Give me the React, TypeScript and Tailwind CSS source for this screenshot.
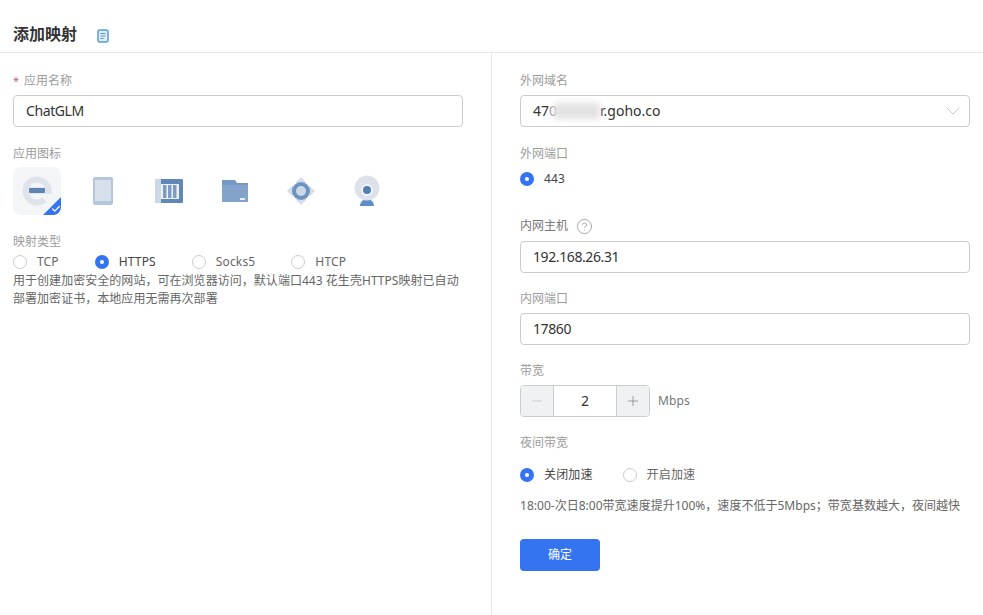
import React from "react";
import { ChevronDown, Check, CircleHelp, Minus, Plus } from "lucide-react";

const Label = ({ children, required }: { children: React.ReactNode; required?: boolean }) => (
  <div className="h-5 pt-px flex items-center text-xs leading-5 text-[#9c9c9c]">
    {required && <span className="text-[11px] text-[#c9607f] mr-[5px]">*</span>}
    {children}
  </div>
);

const Field = ({ value }: { value: string }) => (
  <div className="mt-[5px] h-8 w-[450px] rounded border border-[#ccc] bg-white px-3 flex items-center text-sm tracking-[-0.4px] text-[#333]">
    {value}
  </div>
);

const Radio = ({ text, checked, dark }: { text: string; checked?: boolean; dark?: boolean }) => (
  <div className="flex items-center gap-2.5 text-xs tracking-[0.15px]">
    {checked ? (
      <span className="w-3.5 h-3.5 rounded-full bg-[#3574f0] flex items-center justify-center">
        <span className="w-1 h-1 rounded-full bg-white" />
      </span>
    ) : (
      <span className="w-3.5 h-3.5 rounded-full border border-[#ccc] bg-white" />
    )}
    <span className={dark ? "text-[#444]" : "text-[#666]"}>{text}</span>
  </div>
);

const IconE = () => (
  <svg width="30" height="30" viewBox="0 0 30 30">
    <path d="M22.4 23.8A11.5 11.5 0 1 1 26.5 14" fill="none" stroke="#dfe3ea" strokeWidth="6" />
    <rect x="5" y="11" width="24.5" height="7" fill="#dfe3ea" />
    <rect x="7" y="12" width="16" height="5" rx="1" fill="#5f85b3" />
  </svg>
);

const IconTablet = () => (
  <svg width="22" height="30" viewBox="0 0 22 30">
    <rect x="1" y="1" width="20" height="28" rx="2" fill="#b4c6de" />
    <rect x="3" y="4" width="16" height="21" fill="#d8e0ec" />
  </svg>
);

const IconPanel = () => (
  <svg width="30" height="26" viewBox="0 0 30 26">
    <rect x="1" y="1" width="28" height="24" rx="1" fill="#5f87b7" />
    <rect x="1" y="1" width="6" height="24" fill="#ccd8e7" />
    <rect x="7" y="6" width="18" height="15" fill="#eef2f7" />
    <rect x="9" y="7" width="3.5" height="13" fill="#7d9cc3" />
    <rect x="14" y="7" width="3.5" height="13" fill="#7d9cc3" />
    <rect x="19" y="7" width="3.5" height="13" fill="#7d9cc3" />
  </svg>
);

const IconFolder = () => (
  <svg width="28" height="24" viewBox="0 0 28 24">
    <path d="M1 1h13l2 3h11v19H1z" fill="#7499c4" />
    <path d="M1 6h26v17H1z" fill="#84a3ca" />
    <rect x="19" y="19" width="5" height="2" fill="#e4ebf4" />
  </svg>
);

const IconMove = () => (
  <svg width="30" height="30" viewBox="0 0 30 30">
    <path d="M15 1l6 6H9zM15 29l6-6H9zM1 15l6-6v12zM29 15l-6-6v12z" fill="#d5dfec" />
    <circle cx="15" cy="15" r="9" fill="#6d93c0" />
    <circle cx="15" cy="15" r="5" fill="#cbd8e8" />
  </svg>
);

const IconCam = () => (
  <svg width="28" height="32" viewBox="0 0 28 32">
    <path d="M7 31c0-4 3-7 7-7s7 3 7 7z" fill="#5f8ec6" />
    <circle cx="14" cy="13" r="12.5" fill="#dde2ea" />
    <circle cx="14" cy="15" r="6" fill="#f3f5f8" />
    <circle cx="14" cy="15" r="4" fill="#5180b8" />
  </svg>
);

const icons = [IconTablet, IconPanel, IconFolder, IconMove, IconCam];

const App = () => {
  return (
    <div className="w-[983px] h-[615px] bg-white overflow-hidden flex flex-col font-['Noto_Sans','Noto_Sans_CJK_SC',sans-serif]">
      {/* header */}
      <div className="h-[53px] shrink-0 border-b border-[#e8e8e8] pl-[13px] pt-[22px] flex items-start">
        <span className="text-base leading-6 font-bold text-[#333]">添加映射</span>
        <svg className="ml-5 mt-[7px]" width="12" height="14" viewBox="0 0 12 14" fill="none">
          <rect x="1" y="1" width="10" height="12" rx="2" stroke="#5b9bd8" strokeWidth="1.5" fill="#e1edf9" />
          <path d="M3.5 4.5h5M3.5 7h5M3.5 9.5h3" stroke="#4f8fcf" strokeWidth="1.1" />
        </svg>
      </div>

      <div className="flex flex-1">
        {/* left */}
        <div className="w-[492px] shrink-0 border-r border-[#e8e8e8] pl-[13px] pt-[17px]">
          <Label required>应用名称</Label>
          <Field value="ChatGLM" />

          <div className="mt-4">
            <Label>应用图标</Label>
          </div>
          <div className="mt-1 flex gap-[18px]">
            <div className="relative w-12 h-12 rounded-lg bg-[#f4f5f7] overflow-hidden flex items-center justify-center">
              <div className="blur-[0.4px] flex">
                <IconE />
              </div>
              <svg className="absolute right-0 bottom-0" width="18" height="18" viewBox="0 0 18 18">
                <path d="M18 0v18H0z" fill="#3574f0" />
              </svg>
              <Check className="absolute right-0 bottom-[1px] text-white" size={10} strokeWidth={3} />
            </div>
            {icons.map((Icon, i) => (
              <div key={i} className="w-12 h-12 flex items-center justify-center blur-[0.4px]">
                <Icon />
              </div>
            ))}
          </div>

          <div className="mt-4">
            <Label>映射类型</Label>
          </div>
          <div className="flex gap-9 h-4 items-center mt-[3px]">
            <Radio text="TCP" />
            <Radio text="HTTPS" checked dark />
            <Radio text="Socks5" />
            <Radio text="HTCP" />
          </div>
          <p className="w-[450px] mt-[2px] text-xs tracking-[0.04px] leading-[18px] text-[#666]">
            用于创建加密安全的网站，可在浏览器访问，默认端口443 花生壳HTTPS映射已自动部署加密证书，本地应用无需再次部署
          </p>
        </div>

        {/* right */}
        <div className="flex-1 pl-[28px] pt-[17px]">
          <Label>外网域名</Label>
          <div className="relative mt-[5px] h-8 w-[450px] rounded border border-[#ccc] bg-white px-3 flex items-center text-sm text-[#333]">
            47<span className="text-[#999]">0</span>
            <span className="w-[43px]" />r.goho.co
            <div className="absolute left-[33px] top-[7px] w-[46px] h-[16px] bg-[#e2e2e2] blur-[3px]" />
            <ChevronDown className="absolute right-[4px] top-[3px] text-[#ccc]" size={24} strokeWidth={1} />
          </div>

          <div className="mt-4">
            <Label>外网端口</Label>
          </div>
          <div className="mt-[9px] h-[14px] flex items-center">
            <Radio text="443" checked dark />
          </div>

          <div className="mt-[30px] h-5 flex items-center gap-2">
            <div className="text-xs leading-5 text-[#777]">内网主机</div>
            <CircleHelp className="text-[#888]" size={17} strokeWidth={1} />
          </div>
          <Field value="192.168.26.31" />

          <div className="mt-[15px]">
            <Label>内网端口</Label>
          </div>
          <Field value="17860" />

          <div className="mt-[15px]">
            <Label>带宽</Label>
          </div>
          <div className="mt-[5px] flex items-center">
            <div className="h-8 w-[130px] rounded border border-[#ccc] flex overflow-hidden">
              <div className="w-[33px] bg-[#eff1f3] border-r border-[#ccc] flex items-center justify-center text-[#bbb]">
                <Minus size={16} strokeWidth={1} />
              </div>
              <div className="flex-1 flex items-center justify-center text-sm text-[#333]">2</div>
              <div className="w-[33px] bg-[#eff1f3] border-l border-[#ccc] flex items-center justify-center text-[#777]">
                <Plus size={16} strokeWidth={1} />
              </div>
            </div>
            <span className="ml-2 text-xs tracking-[0.15px] text-[#777]">Mbps</span>
          </div>

          <div className="mt-[15px]">
            <Label>夜间带宽</Label>
          </div>
          <div className="mt-4 h-[14px] flex items-center gap-[30px]">
            <Radio text="关闭加速" checked dark />
            <Radio text="开启加速" />
          </div>
          <p className="mt-[14px] text-xs tracking-[0.02px] leading-5 text-[#666] whitespace-nowrap">
            18:00-次日8:00带宽速度提升100%，速度不低于5Mbps；带宽基数越大，夜间越快
          </p>
          <button className="mt-[23px] block w-20 h-8 rounded bg-[#3574f0] text-white text-xs">确定</button>
        </div>
      </div>
    </div>
  );
};

export default App;
